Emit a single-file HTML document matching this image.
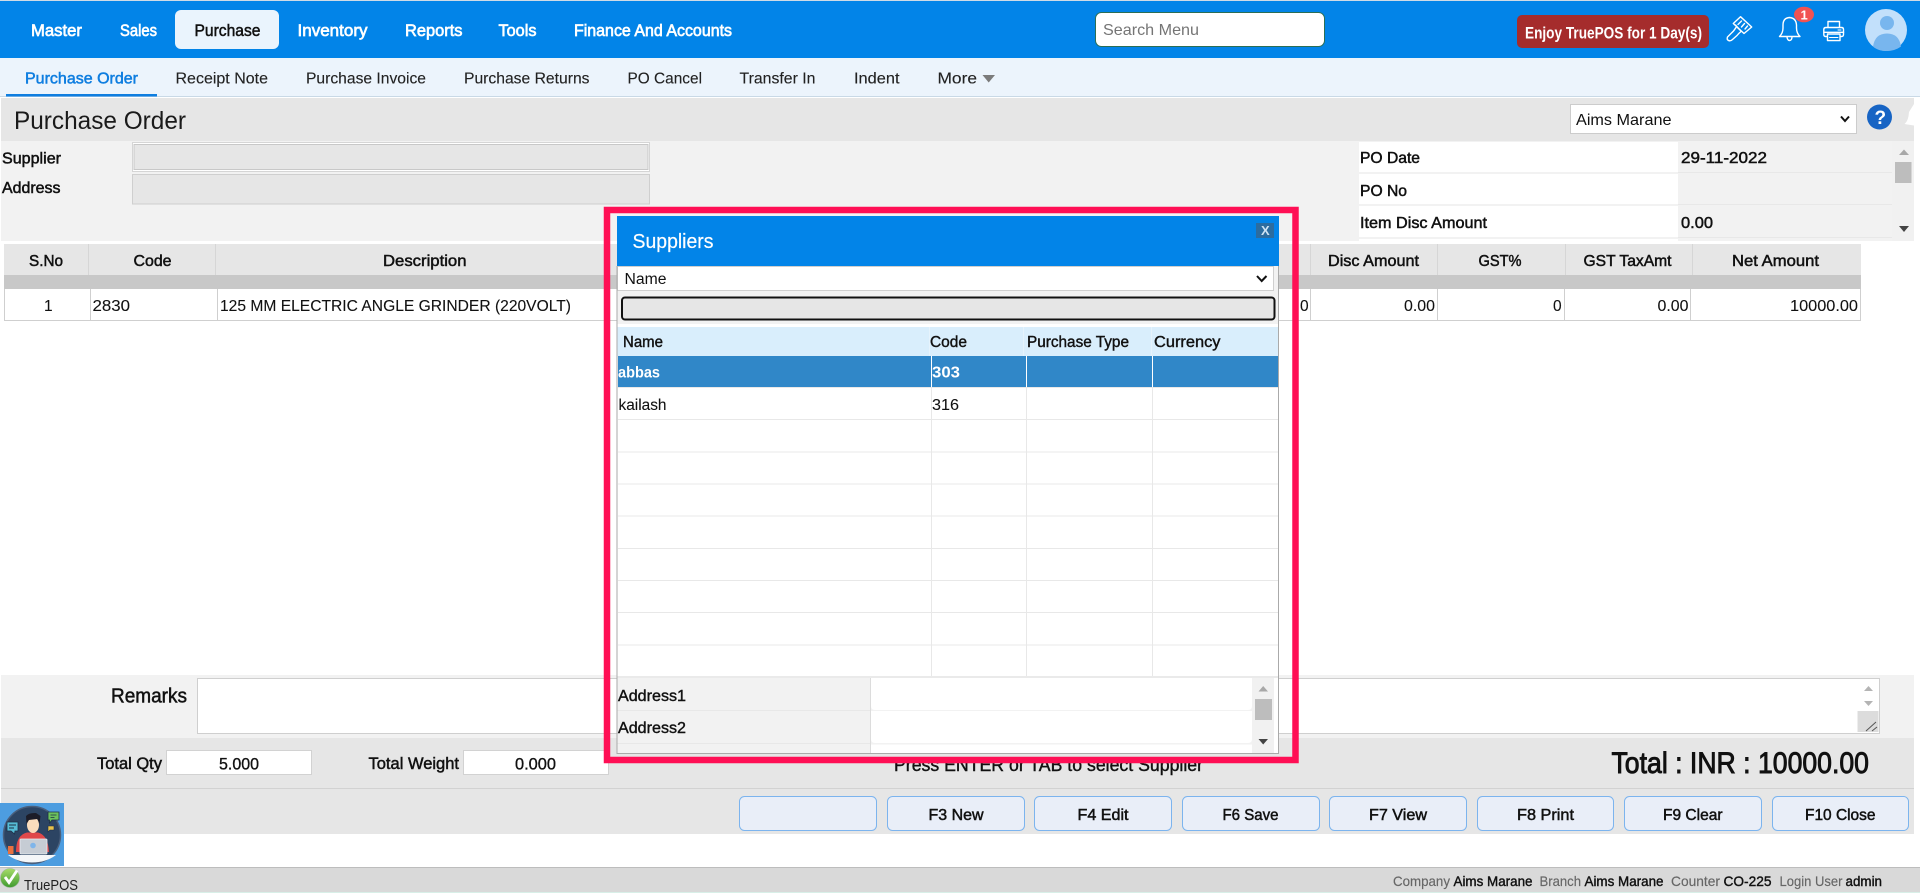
<!DOCTYPE html>
<html lang="en"><head><meta charset="utf-8"><title>Purchase Order</title>
<style>
html,body{margin:0;padding:0;background:#fff;width:1920px;height:893px;overflow:hidden}
svg{display:block}
text{font-family:"Liberation Sans",sans-serif;fill:#111;font-size:16px;white-space:pre}
.m{stroke:#111;stroke-width:.5}
.w{fill:#fff;stroke:#fff;stroke-width:.65;font-size:16.5px}
.sub{font-size:15.5px;fill:#222;stroke:#222;stroke-width:.12}
.g{fill:#666;font-size:14px;stroke:#666;stroke-width:.15}
.d{font-size:14px;fill:#111;stroke:#111;stroke-width:.4}
.r{font-size:15.5px;stroke:#111;stroke-width:.1}
.btn{fill:#e9eef8;stroke:#7cb4ee;stroke-width:1}
.ln{stroke:#e8e8e8;stroke-width:1;fill:none}
</style></head><body>
<svg width="1920" height="893" viewBox="0 0 1920 893" xmlns="http://www.w3.org/2000/svg">
<rect width="1920" height="893" fill="#fff"/>
<!-- top bar -->
<rect width="1920" height="1" fill="#cfdbe6"/>
<rect y="1" width="1920" height="57" fill="#0284e8"/>
<rect x="175" y="10" width="104" height="39" rx="6" fill="#eaf4fd"/>
<text class="w" x="31" y="36" textLength="51" lengthAdjust="spacingAndGlyphs">Master</text>
<text class="w" x="120" y="36" textLength="37" lengthAdjust="spacingAndGlyphs">Sales</text>
<text class="m" style="font-size:16.5px" x="194.500" y="36" textLength="66" lengthAdjust="spacingAndGlyphs">Purchase</text>
<text class="w" x="297.500" y="36" textLength="70" lengthAdjust="spacingAndGlyphs">Inventory</text>
<text class="w" x="405" y="36" textLength="57.500" lengthAdjust="spacingAndGlyphs">Reports</text>
<text class="w" x="498.500" y="36" textLength="38" lengthAdjust="spacingAndGlyphs">Tools</text>
<text class="w" x="574" y="36" textLength="158" lengthAdjust="spacingAndGlyphs">Finance And Accounts</text>
<rect x="1095.500" y="12.500" width="229" height="34" rx="6" fill="#fff" stroke="#2b6e55"/>
<text x="1103" y="35" textLength="96" lengthAdjust="spacingAndGlyphs" style="fill:#757575">Search Menu</text>
<rect x="1517" y="15" width="192" height="33" rx="5" fill="#a52c2c"/>
<text x="1525" y="38.500" textLength="177" lengthAdjust="spacingAndGlyphs" style="fill:#fff;font-weight:bold;font-size:16.500px">Enjoy TruePOS for 1 Day(s)</text>
<!-- brush -->
<g fill="none" stroke="#fff" stroke-width="1.400" stroke-linejoin="round" stroke-linecap="round">
<path d="M1740.500 16.700 L1751.700 27 L1744 33.500 L1733.300 23.500 Z"/>
<path d="M1741.500 21L1738 24.500M1744.500 23.500L1741.500 27M1747.500 26L1745 29"/>
<path d="M1735.500 25 L1738 28 L1741 31"/>
<path d="M1736 27.500 Q1734 31 1730.500 34 L1727.500 37 Q1726.500 39.500 1728.500 40.500 Q1730.500 41.500 1732.500 39.500 L1737 35.500 Q1739 33 1741 31.500"/>
<!-- bell -->
<path d="M1779.500 36.500 Q1783 33 1783 28 L1783 25 Q1783 18 1789.500 17.500 Q1796 18 1796.500 25 L1796.500 28 Q1796.500 33 1800 36.500 Z"/>
<path d="M1787 37 Q1787.500 40.500 1789.500 40.500 Q1791.800 40.500 1792 37"/>
<!-- printer -->
<path d="M1828 27 L1828 21.500 L1839.500 21.500 L1839.500 27"/>
<path d="M1827 36.500 L1825.500 36.500 Q1823.800 36.500 1823.800 34.500 L1823.800 29.500 Q1823.800 27.500 1826 27.500 L1841.500 27.500 Q1843.500 27.500 1843.500 29.500 L1843.500 34.500 Q1843.500 36.500 1841.500 36.500 L1840.500 36.500"/>
<path d="M1824 32.300 L1843.500 32.300"/>
<path d="M1827.500 34 L1840 34 L1840 40.600 L1827.500 40.600 Z"/>
<path d="M1829.500 37.500 L1838 37.500" stroke-width="1"/>
<path d="M1838 30 L1841 30" stroke-width="1"/>
</g>
<ellipse cx="1804" cy="14.500" rx="10" ry="7.800" fill="#f15252"/>
<text x="1800.500" y="19.500" style="fill:#fff;font-size:13px;font-weight:bold">1</text>
<!-- avatar -->
<circle cx="1886" cy="30" r="21" fill="#c2e0fb"/>
<circle cx="1887" cy="23" r="7" fill="#78b6ee"/>
<path d="M1873 46.500 Q1875 33.500 1887 33.500 Q1899 33.500 1901 46.500 Q1895 51 1886.500 51 Q1878 51 1873 46.500 Z" fill="#78b6ee"/>

<!-- sub nav -->
<rect y="58" width="1920" height="38" fill="#ecf4fc"/>
<rect y="96" width="1920" height="1" fill="#c9d9e6"/>
<rect x="6" y="94" width="151" height="2.500" fill="#0f7ee0"/>
<text x="25" y="83.500" textLength="113" lengthAdjust="spacingAndGlyphs" style="fill:#0f7ee0;stroke:#0f7ee0;stroke-width:.5;font-size:15.500px">Purchase Order</text>
<text class="sub" x="175.500" y="83.500" textLength="92.500" lengthAdjust="spacingAndGlyphs">Receipt Note</text>
<text class="sub" x="306" y="83.500" textLength="120" lengthAdjust="spacingAndGlyphs">Purchase Invoice</text>
<text class="sub" x="464" y="83.500" textLength="125.500" lengthAdjust="spacingAndGlyphs">Purchase Returns</text>
<text class="sub" x="627.500" y="83.500" textLength="74.500" lengthAdjust="spacingAndGlyphs">PO Cancel</text>
<text class="sub" x="739.500" y="83.500" textLength="76" lengthAdjust="spacingAndGlyphs">Transfer In</text>
<text class="sub" x="854" y="83.500" textLength="45.500" lengthAdjust="spacingAndGlyphs">Indent</text>
<text class="sub" x="937.500" y="83.500" textLength="39.500" lengthAdjust="spacingAndGlyphs">More</text>
<path d="M982.500 75 L995 75 L988.700 82.500 Z" fill="#7b7b7b"/>

<!-- page header -->
<rect x="1" y="98" width="1913" height="43" fill="#e6e6e6"/>
<text x="14" y="129" textLength="172" lengthAdjust="spacingAndGlyphs" style="font-size:25px;fill:#1a1a1a">Purchase Order</text>
<rect x="1570.500" y="104.500" width="286" height="29" fill="#fff" stroke="#ccc"/>
<text x="1576" y="125" textLength="95.500" lengthAdjust="spacingAndGlyphs" style="font-size:16px">Aims Marane</text>
<path d="M1841 116.500 L1845 121 L1849 116.500" fill="none" stroke="#111" stroke-width="2"/>
<circle cx="1879.500" cy="117" r="12.500" fill="#1764c4"/>
<text x="1874.500" y="124" style="fill:#fff;font-weight:bold;font-size:19px">?</text>
<path d="M1914 104 L1909 112 Q1908.500 121 1904.500 124 L1914 125.500 Z" fill="#fff"/>

<!-- form -->
<rect x="1" y="141" width="1913" height="100" fill="#f2f2f2"/>
<text class="m" x="2" y="163.500" textLength="59" lengthAdjust="spacingAndGlyphs">Supplier</text>
<text class="m" x="2" y="193" textLength="58.500" lengthAdjust="spacingAndGlyphs">Address</text>
<rect x="132.500" y="142.500" width="517" height="29" fill="#fff" stroke="#d5d5d5"/>
<rect x="134" y="144.500" width="514" height="25" fill="#e6e6e6" stroke="#c8c8c8"/>
<rect x="132.500" y="174.500" width="517" height="29.500" fill="#e6e6e6" stroke="#cfcfcf"/>
<rect x="1359" y="142" width="319" height="30" fill="#fff"/>
<rect x="1359" y="174" width="319" height="30" fill="#fff"/>
<rect x="1359" y="206" width="319" height="31" fill="#fff"/>
<rect x="1359" y="239" width="319" height="2" fill="#fff"/>
<path d="M1678 172.500H1892M1678 204.500H1892M1678 237.500H1892" class="ln"/>
<rect x="1892" y="141" width="22" height="100" fill="#f1f1f1"/>
<path d="M1899 155 L1909 155 L1904 149.500 Z" fill="#a8a8a8"/>
<rect x="1895" y="162" width="16.500" height="21" fill="#bdbdbd"/>
<path d="M1899 226 L1909 226 L1904 232 Z" fill="#444"/>
<text class="m" x="1360" y="163" textLength="60" lengthAdjust="spacingAndGlyphs">PO Date</text>
<text class="m" x="1681" y="163" textLength="86" lengthAdjust="spacingAndGlyphs">29-11-2022</text>
<text class="m" x="1360" y="196" textLength="47" lengthAdjust="spacingAndGlyphs">PO No</text>
<text class="m" x="1360" y="228" textLength="127" lengthAdjust="spacingAndGlyphs">Item Disc Amount</text>
<text class="m" x="1681" y="228" textLength="32" lengthAdjust="spacingAndGlyphs">0.00</text>

<!-- table -->
<rect x="4" y="244" width="1857" height="31" fill="#e6e6e6"/>
<rect x="4" y="275" width="1857" height="14" fill="#c8c8c8"/>
<rect x="4" y="289" width="1857" height="32" fill="#fff"/>
<path d="M88.500 244V275M215.500 244V275M1310.500 244V275M1437.500 244V275M1565.500 244V275M1692.500 244V275" stroke="#d6d6d6" fill="none"/>
<path d="M4.500 289V321M90.500 289V321M217.500 289V321M1310.500 289V321M1437.500 289V321M1564.500 289V321M1690.500 289V321M1860.500 289V321M4 320.500H1861" stroke="#cfcfcf" fill="none"/>
<text class="m" x="29" y="266" textLength="34" lengthAdjust="spacingAndGlyphs">S.No</text>
<text class="m" x="133.500" y="266" textLength="38" lengthAdjust="spacingAndGlyphs">Code</text>
<text class="m" x="383" y="266" textLength="83.500" lengthAdjust="spacingAndGlyphs">Description</text>
<text class="m" x="1328" y="266" textLength="91" lengthAdjust="spacingAndGlyphs">Disc Amount</text>
<text class="m" x="1478.500" y="266" textLength="43" lengthAdjust="spacingAndGlyphs">GST%</text>
<text class="m" x="1583.500" y="266" textLength="88" lengthAdjust="spacingAndGlyphs">GST TaxAmt</text>
<text class="m" x="1732" y="266" textLength="87" lengthAdjust="spacingAndGlyphs">Net Amount</text>
<text class="r" x="44" y="311">1</text>
<text class="r" x="92.500" y="311" textLength="37.500" lengthAdjust="spacingAndGlyphs">2830</text>
<text class="r" x="220" y="311" textLength="351" lengthAdjust="spacingAndGlyphs">125 MM ELECTRIC ANGLE GRINDER (220VOLT)</text>
<text class="r" x="1300" y="311">0</text>
<text class="r" x="1404" y="311" textLength="31" lengthAdjust="spacingAndGlyphs">0.00</text>
<text class="r" x="1553" y="311">0</text>
<text class="r" x="1657.500" y="311" textLength="31" lengthAdjust="spacingAndGlyphs">0.00</text>
<text class="r" x="1790" y="311" textLength="68" lengthAdjust="spacingAndGlyphs">10000.00</text>

<!-- remarks + totals -->
<rect x="1" y="675" width="1913" height="63" fill="#f2f2f2"/>
<text class="m" x="111" y="702.500" textLength="76" lengthAdjust="spacingAndGlyphs" style="font-size:20px">Remarks</text>
<rect x="197.500" y="678.500" width="1682" height="55" fill="#fff" stroke="#cfcfcf"/>
<path d="M1864 691 L1873 691 L1868.500 686 Z" fill="#b4b4b4"/>
<path d="M1864 701 L1873 701 L1868.500 706 Z" fill="#b4b4b4"/>
<rect x="1857.500" y="711" width="21" height="21" fill="#dcdcdc"/>
<path d="M1866 731L1876 722M1872 731L1877 727" stroke="#555" fill="none"/>
<rect x="1" y="738" width="1913" height="96" fill="#e6e6e6"/>
<rect x="1" y="788" width="1913" height="1" fill="#d2d2d2"/>
<text class="m" x="97" y="769" textLength="65" lengthAdjust="spacingAndGlyphs" style="font-size:17px">Total Qty</text>
<rect x="166.500" y="750.500" width="145" height="24" fill="#fff" stroke="#d2d2d2"/>
<text x="219" y="769.500" textLength="40" lengthAdjust="spacingAndGlyphs" style="font-size:17px;stroke:#111;stroke-width:.35">5.000</text>
<text class="m" x="368.500" y="769" textLength="90.500" lengthAdjust="spacingAndGlyphs" style="font-size:17px">Total Weight</text>
<rect x="463.500" y="750.500" width="145" height="24" fill="#fff" stroke="#d2d2d2"/>
<text x="515" y="769.500" textLength="41" lengthAdjust="spacingAndGlyphs" style="font-size:17px;stroke:#111;stroke-width:.35">0.000</text>
<text x="894" y="771" textLength="309" lengthAdjust="spacingAndGlyphs" style="font-size:18px;stroke:#111;stroke-width:.4">Press ENTER or TAB to select Supplier</text>
<text x="1611.500" y="773" textLength="257.500" lengthAdjust="spacingAndGlyphs" style="font-size:29.500px;stroke:#111;stroke-width:.9">Total : INR : 10000.00</text>

<!-- buttons -->
<rect class="btn" x="739.500" y="796.500" width="137" height="34" rx="5"/>
<rect class="btn" x="887.500" y="796.500" width="137" height="34" rx="5"/>
<rect class="btn" x="1034.500" y="796.500" width="137" height="34" rx="5"/>
<rect class="btn" x="1182.500" y="796.500" width="137" height="34" rx="5"/>
<rect class="btn" x="1329.500" y="796.500" width="137" height="34" rx="5"/>
<rect class="btn" x="1477.500" y="796.500" width="136" height="34" rx="5"/>
<rect class="btn" x="1624.500" y="796.500" width="137" height="34" rx="5"/>
<rect class="btn" x="1772.500" y="796.500" width="136" height="34" rx="5"/>
<text class="m" x="928.500" y="820" textLength="55" lengthAdjust="spacingAndGlyphs">F3 New</text>
<text class="m" x="1077.500" y="820" textLength="51" lengthAdjust="spacingAndGlyphs">F4 Edit</text>
<text class="m" x="1222.500" y="820" textLength="56" lengthAdjust="spacingAndGlyphs">F6 Save</text>
<text class="m" x="1369" y="820" textLength="58" lengthAdjust="spacingAndGlyphs">F7 View</text>
<text class="m" x="1517" y="820" textLength="57" lengthAdjust="spacingAndGlyphs">F8 Print</text>
<text class="m" x="1663" y="820" textLength="59.500" lengthAdjust="spacingAndGlyphs">F9 Clear</text>
<text class="m" x="1805" y="820" textLength="70.500" lengthAdjust="spacingAndGlyphs">F10 Close</text>

<!-- supplier modal -->
<rect x="607" y="210" width="688.500" height="550" fill="none" stroke="#ff0f55" stroke-width="6.500"/>
<rect x="617" y="216" width="662" height="538" fill="#fff"/>
<rect x="617" y="216" width="662" height="50" fill="#0284e8"/>
<text x="632.500" y="248" textLength="81" lengthAdjust="spacingAndGlyphs" style="fill:#fff;font-size:20px;stroke:#fff;stroke-width:.2">Suppliers</text>
<rect x="1256" y="223" width="18" height="15" fill="#2c6c9f"/>
<text x="1261" y="235" style="fill:#cfe3f3;font-size:13px;font-weight:bold">X</text>
<rect x="617" y="266" width="662" height="61" fill="#f2f2f2"/>
<rect x="617.500" y="266.500" width="656" height="24" fill="#fff" stroke="#cfcfcf"/>
<text x="624.500" y="284" textLength="42" lengthAdjust="spacingAndGlyphs" style="font-size:15.500px">Name</text>
<path d="M1257 276 L1261.700 281 L1266.500 276" fill="none" stroke="#111" stroke-width="2"/>
<rect x="622" y="297.500" width="652.500" height="22" rx="3" fill="#e6e6e6" stroke="#111" stroke-width="2"/>
<rect x="617" y="324" width="662" height="3" fill="#fff"/>
<rect x="617" y="327" width="662" height="29" fill="#d9eefc"/>
<path d="M929.500 327V356M1023.500 327V356M1151.500 327V356" stroke="#e6f3fc" fill="none"/>
<text class="d" x="623" y="347" textLength="40" lengthAdjust="spacingAndGlyphs" style="font-size:15.500px">Name</text>
<text class="d" x="930" y="347" textLength="37" lengthAdjust="spacingAndGlyphs" style="font-size:15.500px">Code</text>
<text class="d" x="1027" y="347" textLength="102" lengthAdjust="spacingAndGlyphs" style="font-size:15.500px">Purchase Type</text>
<text class="d" x="1154" y="347" textLength="66.500" lengthAdjust="spacingAndGlyphs" style="font-size:15.500px">Currency</text>
<rect x="618" y="356" width="660" height="31" fill="#3087c8"/>
<path d="M931.500 356V678M1026.500 356V678M1152.500 356V678" stroke="#e8e8e8" fill="none"/>
<path d="M931.500 356V387M1026.500 356V387M1152.500 356V387" stroke="#fff" fill="none"/>
<path d="M618 387.500H1278M618 419.500H1278M618 452H1278M618 484H1278M618 516H1278M618 548.500H1278M618 580.500H1278M618 612.500H1278M618 645H1278" class="ln"/>
<text x="618" y="377.500" textLength="42" lengthAdjust="spacingAndGlyphs" style="fill:#fff;font-weight:bold;font-size:16px">abbas</text>
<text x="932" y="377.500" textLength="28" lengthAdjust="spacingAndGlyphs" style="fill:#fff;font-weight:bold;font-size:16px">303</text>
<text class="r" x="618.500" y="410" textLength="48" lengthAdjust="spacingAndGlyphs">kailash</text>
<text class="r" x="932" y="410" textLength="27" lengthAdjust="spacingAndGlyphs">316</text>
<rect x="617" y="676" width="662" height="2" fill="#eaeaea"/>
<rect x="617" y="678" width="254" height="75" fill="#f2f2f2"/>
<rect x="871" y="678" width="381" height="75" fill="#f2f2f2"/>
<path d="M871 678H1252V706Q1252 710 1248 710H875Q871 710 871 706Z" fill="#fff"/>
<path d="M871 711H1252V739Q1252 743 1248 743H875Q871 743 871 739Z" fill="#fff"/>
<rect x="871" y="744.500" width="381" height="9" fill="#fff"/>
<path d="M617 710.500H871M617 743.500H871" stroke="#e8e8e8" fill="none"/>
<path d="M870.500 678V753" stroke="#dcdcdc" fill="none"/>
<rect x="1252" y="678" width="22" height="75" fill="#f1f1f1"/>
<path d="M1258.500 691.500 L1268 691.500 L1263.200 686 Z" fill="#a8a8a8"/>
<rect x="1255" y="699" width="17" height="21" fill="#bdbdbd"/>
<path d="M1258.500 739 L1268 739 L1263.200 744.500 Z" fill="#444"/>
<text class="d" x="618" y="701" textLength="68" lengthAdjust="spacingAndGlyphs" style="font-size:15.500px">Address1</text>
<text class="d" x="618" y="733" textLength="68" lengthAdjust="spacingAndGlyphs" style="font-size:15.500px">Address2</text>
<path d="M617 266V753.500H1278.500V266" fill="none" stroke="#aaa" stroke-width="1"/>

<!-- assistant image -->
<rect y="803" width="64" height="63" fill="#4d9de0"/>
<circle cx="32" cy="835" r="28.500" fill="#2c4463" stroke="#4a5f7c" stroke-width="1.500"/>
<path d="M8 855 L56 855 Q46 862.500 32 862.500 Q18 862.500 8 855 Z" fill="#f4f6f8"/>
<path d="M16 852 Q16 835 27 832.500 L38 832.500 Q48 835 49 852 Z" fill="#e0484a"/>
<rect x="8" y="846" width="5.500" height="8" fill="#e8703f"/>
<ellipse cx="33" cy="825" rx="6" ry="8" fill="#fbdcbc"/>
<path d="M26.500 824 L26 816 Q29 812.500 36 813 L40.500 816 L39.500 824 L37.500 819 L29 820 Z" fill="#1c1c28"/>
<rect x="20" y="839" width="27" height="15" rx="1" fill="#c6ccd4" stroke="#e8ecf0" stroke-width=".8"/>
<circle cx="33" cy="845.500" r="2.800" fill="#7fb5ea"/>
<path d="M7 822H18V831H15L14.500 834L11 831H7Z" fill="#56bcd6" stroke="#1e2f47" stroke-width=".8"/>
<path d="M9 825H16M9 828H14" stroke="#1e2f47" stroke-width="1"/>
<path d="M48 812H59V820H52L49.500 823L49.500 820H48Z" fill="#6cc15c" stroke="#1e2f47" stroke-width=".8"/>
<path d="M50.500 815H56.500M50.500 817.500H54.500" stroke="#1e2f47" stroke-width=".8"/>
<path d="M48 826H54V830H50L48 832Z" fill="#e8c24b" stroke="#1e2f47" stroke-width=".6"/>

<!-- status bar -->
<rect y="867" width="1920" height="26" fill="#d9d9d9"/>
<rect y="867" width="1920" height="1" fill="#bdbdbd"/>
<rect y="892" width="1920" height="1" fill="#d9efe8"/>
<defs><linearGradient id="chk" x1="0" y1="0" x2="0" y2="1"><stop offset="0" stop-color="#a8dc6a"/><stop offset="1" stop-color="#3f9a2e"/></linearGradient></defs>
<circle cx="10" cy="878" r="9.500" fill="url(#chk)" stroke="#9db59a" stroke-width=".6"/>
<path d="M5 877 L9 882.500 L17 870.500" fill="none" stroke="#fff" stroke-width="2.800"/>
<text x="24" y="890" textLength="54" lengthAdjust="spacingAndGlyphs" style="font-size:15px;fill:#222">TruePOS</text>
<text class="g" x="1393" y="886" textLength="57" lengthAdjust="spacingAndGlyphs">Company</text>
<text class="d" x="1453.500" y="886" textLength="79" lengthAdjust="spacingAndGlyphs">Aims Marane</text>
<text class="g" x="1539.500" y="886" textLength="41.500" lengthAdjust="spacingAndGlyphs">Branch</text>
<text class="d" x="1584.500" y="886" textLength="79" lengthAdjust="spacingAndGlyphs">Aims Marane</text>
<text class="g" x="1671" y="886" textLength="49" lengthAdjust="spacingAndGlyphs">Counter</text>
<text class="d" x="1723.500" y="886" textLength="48" lengthAdjust="spacingAndGlyphs">CO-225</text>
<text class="g" x="1779.500" y="886" textLength="63" lengthAdjust="spacingAndGlyphs">Login User</text>
<text class="d" x="1845.500" y="886" textLength="36.500" lengthAdjust="spacingAndGlyphs">admin</text>
</svg>
</body></html>
